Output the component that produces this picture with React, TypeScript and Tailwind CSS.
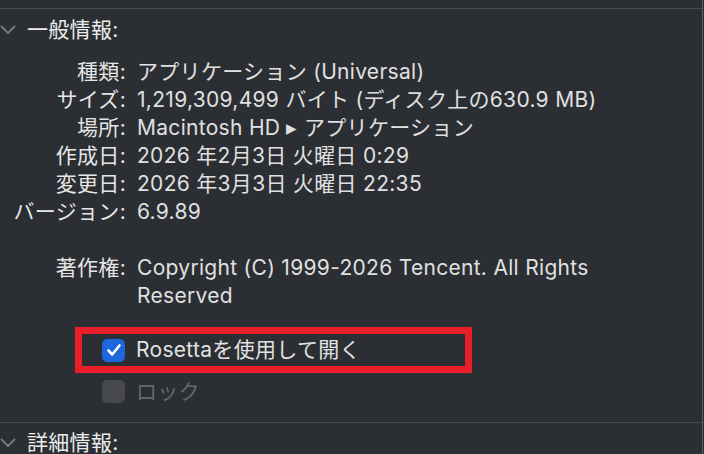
const rows: [string, string][] = [
  ["種類:", "アプリケーション (Universal)"],
  ["サイズ:", "1,219,309,499 バイト (ディスク上の630.9 MB)"],
  ["場所:", "Macintosh HD ▸ アプリケーション"],
  ["作成日:", "2026 年2月3日 火曜日 0:29"],
  ["変更日:", "2026 年3月3日 火曜日 22:35"],
  ["バージョン:", "6.9.89"],
];

const Chevron = () => (
  <svg width="16" height="10" viewBox="0 0 16 10" className="shrink-0">
    <polyline
      points="1.5,1.5 8,8 14.5,1.5"
      fill="none"
      stroke="#76787b"
      strokeWidth="2"
      strokeLinecap="round"
      strokeLinejoin="round"
    />
  </svg>
);

const SectionHeader = ({ title }: { title: string }) => (
  <div className="flex items-center h-[40px]">
    <div className="w-[27px] flex items-center">
      <Chevron />
    </div>
    <span className="text-[21px] tracking-[0.3px] text-[#ececec]">{title}</span>
  </div>
);

export default function App() {
  return (
    <div
      className="w-[704px] h-[454px] bg-[#2b2e32] overflow-hidden"
      style={{ fontFamily: 'Inter, "Noto Sans CJK JP", sans-serif' }}
    >
      <div className="w-[703px] h-full border-r border-[#5d5f62] flex flex-col">
        <div className="h-[8px] shrink-0" />
        <div className="h-px bg-[#47494c] shrink-0" />

        {/* General info */}
        <div className="mt-[1px] shrink-0">
          <SectionHeader title="一般情報:" />
        </div>

        <div className="mt-[8px] shrink-0 grid grid-cols-[126px_1fr] gap-x-[11px] text-[21px] tracking-[0.3px] leading-[28px]">
          {rows.map(([label, value]) => (
            <div key={label} className="contents">
              <div className="text-right text-[#e6e6e6] whitespace-nowrap">{label}</div>
              <div className="text-[#e0e0e0] whitespace-nowrap">{value}</div>
            </div>
          ))}
          <div className="h-[28px]" />
          <div className="h-[28px]" />
          <div className="text-right text-[#e6e6e6] whitespace-nowrap">著作権:</div>
          <div className="text-[#e0e0e0] w-[520px]">
            Copyright (C) 1999-2026 Tencent. All Rights Reserved
          </div>
        </div>

        {/* Options */}
        <div className="mt-[17px] shrink-0 ml-[75px] w-[397px] h-[46px] border-[7px] border-[#e81f29] flex items-center pl-[20px]">
          <div className="w-[23px] h-[23px] rounded-[5px] bg-[#1c67dd] flex items-center justify-center">
            <svg width="16" height="14" viewBox="0 0 16 14">
              <polyline
                points="2.5,7.5 6.2,11.5 13.5,2.5"
                fill="none"
                stroke="#ffffff"
                strokeWidth="2.6"
                strokeLinecap="round"
                strokeLinejoin="round"
              />
            </svg>
          </div>
          <span className="ml-[11px] text-[21px] tracking-[0.3px] text-[#e2e2e2]">Rosettaを使用して開く</span>
        </div>

        <div className="mt-[7px] shrink-0 ml-[102px] flex items-center h-[23px]">
          <div className="w-[23px] h-[23px] rounded-[5px] bg-[#48494b]" />
          <span className="ml-[11px] text-[21px] tracking-[0.3px] text-[#66686b]">ロック</span>
        </div>

        <div className="mt-[19px] shrink-0 h-px bg-[#4a4c4f]" />

        {/* More info */}
        <div className="shrink-0">
          <SectionHeader title="詳細情報:" />
        </div>
      </div>
    </div>
  );
}
